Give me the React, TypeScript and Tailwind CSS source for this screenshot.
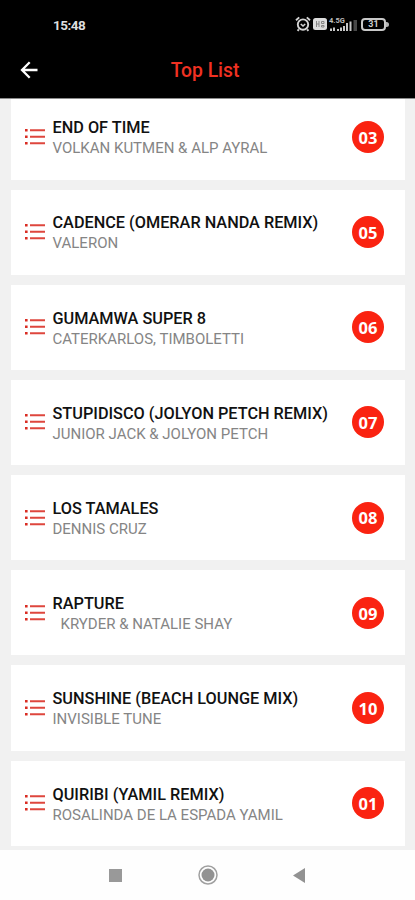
const tracks = [
  { title: 'END OF TIME', artist: 'VOLKAN KUTMEN & ALP AYRAL', rank: '03' },
  { title: 'CADENCE (OMERAR NANDA REMIX)', artist: 'VALERON', rank: '05' },
  { title: 'GUMAMWA SUPER 8', artist: 'CATERKARLOS, TIMBOLETTI', rank: '06' },
  { title: 'STUPIDISCO (JOLYON PETCH REMIX)', artist: 'JUNIOR JACK & JOLYON PETCH', rank: '07' },
  { title: 'LOS TAMALES', artist: 'DENNIS CRUZ', rank: '08' },
  { title: 'RAPTURE', artist: 'KRYDER & NATALIE SHAY', rank: '09', indent: true },
  { title: 'SUNSHINE (BEACH LOUNGE MIX)', artist: 'INVISIBLE TUNE', rank: '10' },
  { title: 'QUIRIBI (YAMIL REMIX)', artist: 'ROSALINDA DE LA ESPADA YAMIL', rank: '01' },
]

function StatusIcons() {
  return (
    <div className="flex items-center">
      {/* Alarm */}
      <svg width="16" height="16" viewBox="0 0 16 16" fill="none" stroke="#d4d4d4" strokeWidth="1.9">
        <circle cx="8" cy="8.6" r="5.2" />
        <path d="M1 4.2 4.2 1.4M15 4.2 11.8 1.4M3.8 13.3 2.6 14.8M12.2 13.3l1.2 1.5" />
        <path d="m5.8 8 2.2 2 2.2-2" strokeWidth="1.6" />
      </svg>
      {/* HD voice */}
      <svg className="ml-[2px]" width="14" height="12" viewBox="0 0 14 12">
        <rect width="14" height="12" rx="2.5" fill="#dcdcdc" />
        <path d="M3.5 3v6M6 3v6M3.5 6H6M8.5 3.5h2.5v2H8.5zM8.5 7.5H11V9H8.5z" stroke="#858585" strokeWidth="1" fill="none" />
      </svg>
      <div className="ml-[2px] flex h-[16px] items-end">
        <div className="flex w-[16px] flex-col">
          <span className="h-[8px] text-[7.5px] leading-[8px] font-bold text-[#bdbdbd]">4.5G</span>
          <svg width="16" height="7" viewBox="0 0 16 7" fill="#c8c8c8">
            <path d="M1 3.500h2V6H1zM4 2.500h2V6H4zM8 4h2v2H8zM11 2.500h2V6h-2zM14 1h2v5h-2z" />
          </svg>
        </div>
        <svg className="ml-px" width="11" height="14" viewBox="0 0 11 14">
          <path d="M0 5h2v8H0zM3.500 3.500h2V13h-2z" fill="#c8c8c8" />
          <path d="M7.500 2H11v11H7.500z" fill="#484848" />
        </svg>
      </div>
      {/* Battery */}
      <div className="ml-[4px] flex items-center">
        <div className="flex h-[13px] w-[25px] items-center justify-center rounded-[4px] border-2 border-[#c8c8c8] text-[9px] leading-none font-bold text-[#cfcfcf]">
          31
        </div>
        <div className="h-[5px] w-[3px] rounded-r bg-[#b5b5b5]" />
      </div>
    </div>
  )
}

function Header() {
  return (
    <header className="relative z-10 h-[99px] shrink-0 border-b border-[#8c8c8c] bg-black">
      <div className="flex h-[48px] items-center justify-between pr-[26px] pl-[53px]">
        <span className="pt-[2px] text-[13.5px] font-bold tracking-[-0.5px] text-[#dedede]">15:48</span>
        <StatusIcons />
      </div>
      <div className="grid h-[44px] grid-cols-[1fr_auto_1fr] items-center pr-[5px]">
        <svg className="ml-[20px]" width="18" height="18" viewBox="0 0 18 18" fill="none" stroke="#fff" strokeWidth="2.3">
          <path d="M17.5 9H2.3M9.7 1.2 2 9l7.7 7.8" />
        </svg>
        <h1 className="pt-[2px] text-[19.3px] leading-[28px] font-medium text-[#f03122]">Top List</h1>
      </div>
    </header>
  )
}

function ListIcon() {
  return (
    <svg width="20" height="18" viewBox="0 0 20 18" fill="#d92c22">
      <path d="M0 1h2.6v2.5H0zM0 7.5h2.6V10H0zM0 14h2.6v2.5H0z" />
      <path d="M5 1.2h15v2H5zM5 7.7h15v2H5zM5 14.2h15v2H5z" opacity=".88" />
    </svg>
  )
}

function TrackCard({ title, artist, rank, indent }: { title: string; artist: string; rank: string; indent?: boolean }) {
  return (
    <li className="flex h-[85.2px] shrink-0 items-center bg-white pr-[21px] pl-[13.5px]">
      <ListIcon />
      <div className="ml-[8px] min-w-0 flex-1 pt-[2.6px] whitespace-nowrap">
        <h2 className="text-[16.27px] leading-[21px] font-medium text-[#111]">{title}</h2>
        <p className={indent ? 'pl-[8px] text-[15px] leading-[21px] text-[#858585]' : 'text-[15px] leading-[21px] text-[#858585]'}>
          {artist}
        </p>
      </div>
      <span className="flex size-[32px] items-center justify-center rounded-full bg-[#fa2311] pt-[2px] font-['Open_Sans',sans-serif] text-[16.5px] leading-none font-bold text-white">
        {rank}
      </span>
    </li>
  )
}

export default function App() {
  return (
    <div className="flex h-[900px] w-[415px] flex-col overflow-hidden bg-[#f1f1f1] font-[Roboto,sans-serif]">
      <Header />
      <ul className="-mt-[4.7px] flex min-h-0 flex-1 flex-col gap-[10px] overflow-hidden pr-[10px] pl-[11px]">
        {tracks.map((track) => (
          <TrackCard key={track.rank} {...track} />
        ))}
      </ul>
      <nav className="flex h-[50px] shrink-0 items-center bg-[#fefefe]">
        <svg className="ml-[109px]" width="13" height="13" viewBox="0 0 13 13">
          <rect width="13" height="13" fill="#999" />
        </svg>
        <svg className="ml-[76px]" width="20" height="20" viewBox="0 0 20 20">
          <circle cx="10" cy="10" r="9" fill="none" stroke="#a0a0a0" strokeWidth="1.5" />
          <circle cx="10" cy="10" r="6.5" fill="#929292" />
        </svg>
        <svg className="ml-[75px]" width="12" height="15" viewBox="0 0 12 15">
          <path d="M12 0v15L0 7.5z" fill="#929292" />
        </svg>
      </nav>
    </div>
  )
}
